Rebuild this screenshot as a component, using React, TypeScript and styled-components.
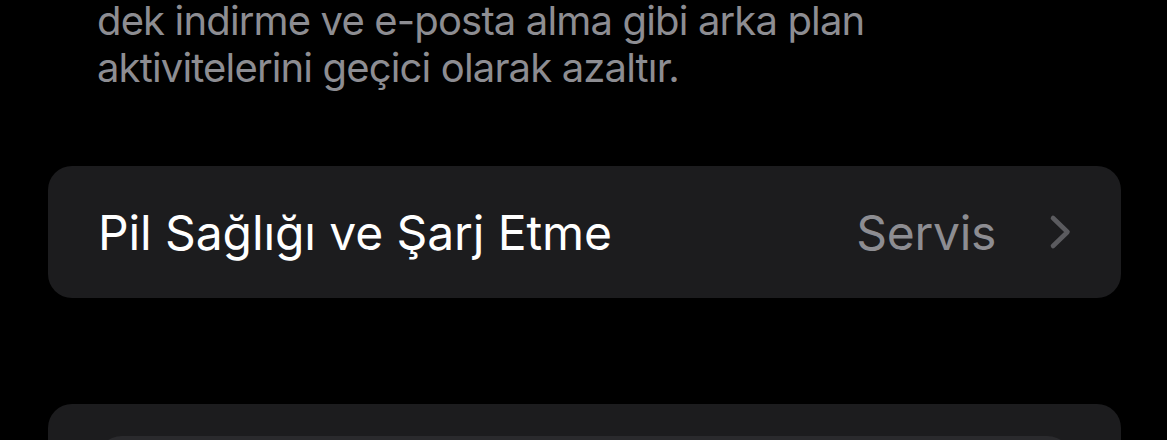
import React from 'react';
import styled, { createGlobalStyle } from 'styled-components';

const GlobalStyle = createGlobalStyle`
  html, body {
    margin: 0;
    padding: 0;
    background: #000;
    overflow: hidden;
  }
  body {
    font-family: Inter, "Noto Sans", "Liberation Sans", sans-serif;
    -webkit-font-smoothing: antialiased;
  }
`;

function Chevron() {
  return (
    <svg width="26" height="36" viewBox="0 0 26 36" fill="none">
      <path
        d="M5 4 L19.5 18 L5 32"
        stroke="#5b5b5f"
        strokeWidth="4.6"
        strokeLinecap="round"
        strokeLinejoin="round"
      />
    </svg>
  );
}

function App() {
  return (
    <Page>
      <GlobalStyle />
      <Footnote>
        dek indirme ve e-posta alma gibi arka plan
        <br />
        aktivitelerini geçici olarak azaltır.
      </Footnote>

      <Card>
        <Row>
          <Title>Pil Sağlığı ve Şarj Etme</Title>
          <Detail>Servis</Detail>
          <ChevronWrap>
            <Chevron />
          </ChevronWrap>
        </Row>
      </Card>

      <ChartCard>
        <ChartBox />
      </ChartCard>
    </Page>
  );
}

// Styles
const Page = styled.div`
  display: flex;
  flex-direction: column;
  padding: 0 46px 0 48px;
  height: 440px;
  box-sizing: border-box;
  overflow: hidden;
`;

const Footnote = styled.p`
  margin: -3px 0 0 49px;
  font-size: 40px;
  line-height: 47px;
  color: #8d8d92;
  letter-spacing: -0.85px;
`;

const Card = styled.section`
  margin-top: 75px;
  background: #1c1c1e;
  border-radius: 24px;
  height: 132px;
  flex-shrink: 0;
`;

const Row = styled.div`
  display: flex;
  align-items: center;
  height: 100%;
  padding: 0 47px 0 50px;
  box-sizing: border-box;
`;

const Title = styled.span`
  flex: 1;
  font-size: 48px;
  color: #fff;
  letter-spacing: -0.1px;
`;

const Detail = styled.span`
  font-size: 48px;
  color: #8d8d92;
  letter-spacing: -0.3px;
`;

const ChevronWrap = styled.span`
  display: flex;
  margin-left: 52px;
`;

const ChartCard = styled.section`
  margin-top: 106px;
  flex: 1;
  min-height: 0;
  overflow: hidden;
  background: #1c1c1e;
  border-radius: 24px 24px 0 0;
  padding: 32px 48px 0;
`;

const ChartBox = styled.div`
  height: 80px;
  background: #2a2a2d;
  border-radius: 26px;
`;

export default App;
